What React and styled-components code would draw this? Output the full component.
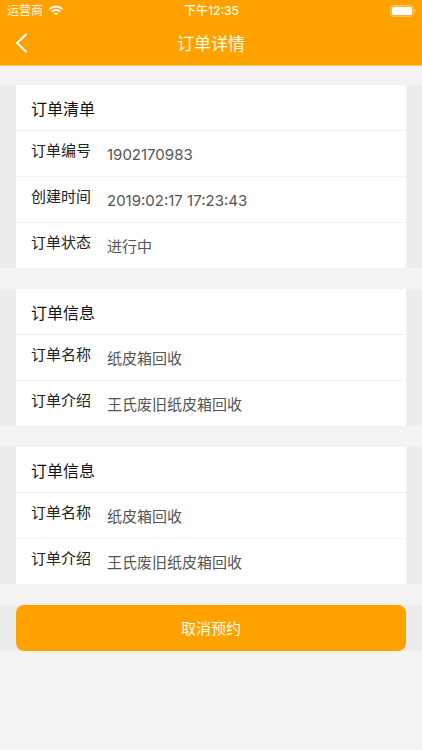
import React from "react";
import styled, { createGlobalStyle } from "styled-components";

const GlobalStyle = createGlobalStyle`
  * { box-sizing: border-box; }
  body {
    margin: 0;
    background: #f3f3f3;
    font-family: Inter, "Noto Sans CJK SC", sans-serif;
    color: #222;
  }
`;

const Header = styled.header`
  background: #ffa200;
  color: #fffae8;
  border-bottom: 1px solid #ffc766;
`;

const StatusBar = styled.div`
  display: grid;
  grid-template-columns: 1fr auto 1fr;
  align-items: center;
  height: 21px;
  padding: 0 6px 0 7px;
  font-size: 12px;
  line-height: 20px;
`;

const Carrier = styled.span`
  display: flex;
  align-items: center;
  gap: 6px;
`;

const Clock = styled.time`
  font-weight: 500;
`;

const Battery = styled.svg`
  justify-self: end;
`;

const NavBar = styled.div`
  display: grid;
  grid-template-columns: 44px 1fr 44px;
  align-items: center;
  height: 44px;
`;

const BackButton = styled.button`
  display: flex;
  align-items: center;
  height: 44px;
  padding: 0 0 0 15px;
  border: 0;
  background: none;
  color: inherit;
`;

const PageTitle = styled.h1`
  margin: 0;
  padding-top: 2px;
  font-size: 17px;
  font-weight: 400;
  line-height: 24px;
  text-align: center;
`;

const Content = styled.main`
  display: flex;
  flex-direction: column;
  gap: 21px;
  padding: 19px 0;
`;

const Band = styled.section`
  padding: 0 16px;
  background: #ededed;
`;

const Card = styled.div`
  background: #fff;
`;

const CardTitle = styled.h2`
  margin: 0;
  padding: 12px 15px 9px;
  border-bottom: 1px solid #eee;
  font-size: 16px;
  font-weight: 400;
  line-height: 24px;
  color: #111;
`;

const Fields = styled.dl`
  margin: 0;
`;

const Field = styled.div`
  display: flex;
  gap: 12px;
  padding: 0 15px;
  border-bottom: 1px solid #f3f3f3;
  line-height: 24px;

  &:last-child {
    border-bottom: 0;
  }
`;

const Label = styled.dt`
  flex: 0 0 64px;
  padding-top: 8px;
  font-size: 15px;
`;

const Value = styled.dd`
  margin: 0;
  padding: 12px 0 9px;
  font-size: 15px;
  color: #555;
`;

const CancelButton = styled.button`
  display: block;
  width: 100%;
  height: 46px;
  padding: 0 0 2px;
  border: 0;
  border-radius: 8px;
  background: #ffa200;
  color: #fffae8;
  font: inherit;
  font-size: 15px;
`;

const sections = [
  {
    title: "订单清单",
    fields: [
      ["订单编号", "1902170983"],
      ["创建时间", "2019:02:17 17:23:43"],
      ["订单状态", "进行中"],
    ],
  },
  {
    title: "订单信息",
    fields: [
      ["订单名称", "纸皮箱回收"],
      ["订单介绍", "王氏废旧纸皮箱回收"],
    ],
  },
  {
    title: "订单信息",
    fields: [
      ["订单名称", "纸皮箱回收"],
      ["订单介绍", "王氏废旧纸皮箱回收"],
    ],
  },
];

function WifiIcon() {
  return (
    <svg width="14" height="11" viewBox="0 0 14 11" fill="none" stroke="#fffdf5" strokeWidth="2" aria-hidden="true">
      <path d="M0.7 4.2 C4.2 0.5 9.8 0.5 13.3 4.2" />
      <path d="M3.1 6.7 C5.3 4.5 8.7 4.5 10.9 6.7" />
      <path d="M4.9 8.3 C6.1 7.2 7.9 7.2 9.1 8.3 L7 10.5 Z" fill="#fffdf5" stroke="none" />
    </svg>
  );
}

function BatteryIcon() {
  return (
    <Battery width="26" height="12" viewBox="0 0 26 12" aria-hidden="true">
      <rect x="0.5" y="0.5" width="23" height="11" rx="3" fill="#ffb133" stroke="#ffc766" />
      <rect x="2" y="2" width="20" height="8" rx="1.5" fill="#fff" />
      <path d="M24.6 4 C26.2 4.6 26.2 7.4 24.6 8 Z" fill="#ffc766" />
    </Battery>
  );
}

export default function App() {
  return (
    <>
      <GlobalStyle />
      <Header>
        <StatusBar>
          <Carrier>
            运营商
            <WifiIcon />
          </Carrier>
          <Clock>下午12:35</Clock>
          <BatteryIcon />
        </StatusBar>
        <NavBar>
          <BackButton type="button" aria-label="返回">
            <svg width="13" height="20" viewBox="0 0 13 20" fill="none" stroke="#fff" strokeWidth="2" strokeLinecap="round" aria-hidden="true">
              <path d="M11 1.5 L2 10 L11 18.5" />
            </svg>
          </BackButton>
          <PageTitle>订单详情</PageTitle>
        </NavBar>
      </Header>
      <Content>
        {sections.map((section, index) => (
          <Band key={index}>
            <Card>
              <CardTitle>{section.title}</CardTitle>
              <Fields>
                {section.fields.map(([label, value]) => (
                  <Field key={label}>
                    <Label>{label}</Label>
                    <Value>{value}</Value>
                  </Field>
                ))}
              </Fields>
            </Card>
          </Band>
        ))}
        <Band>
          <CancelButton type="button">取消预约</CancelButton>
        </Band>
      </Content>
    </>
  );
}
